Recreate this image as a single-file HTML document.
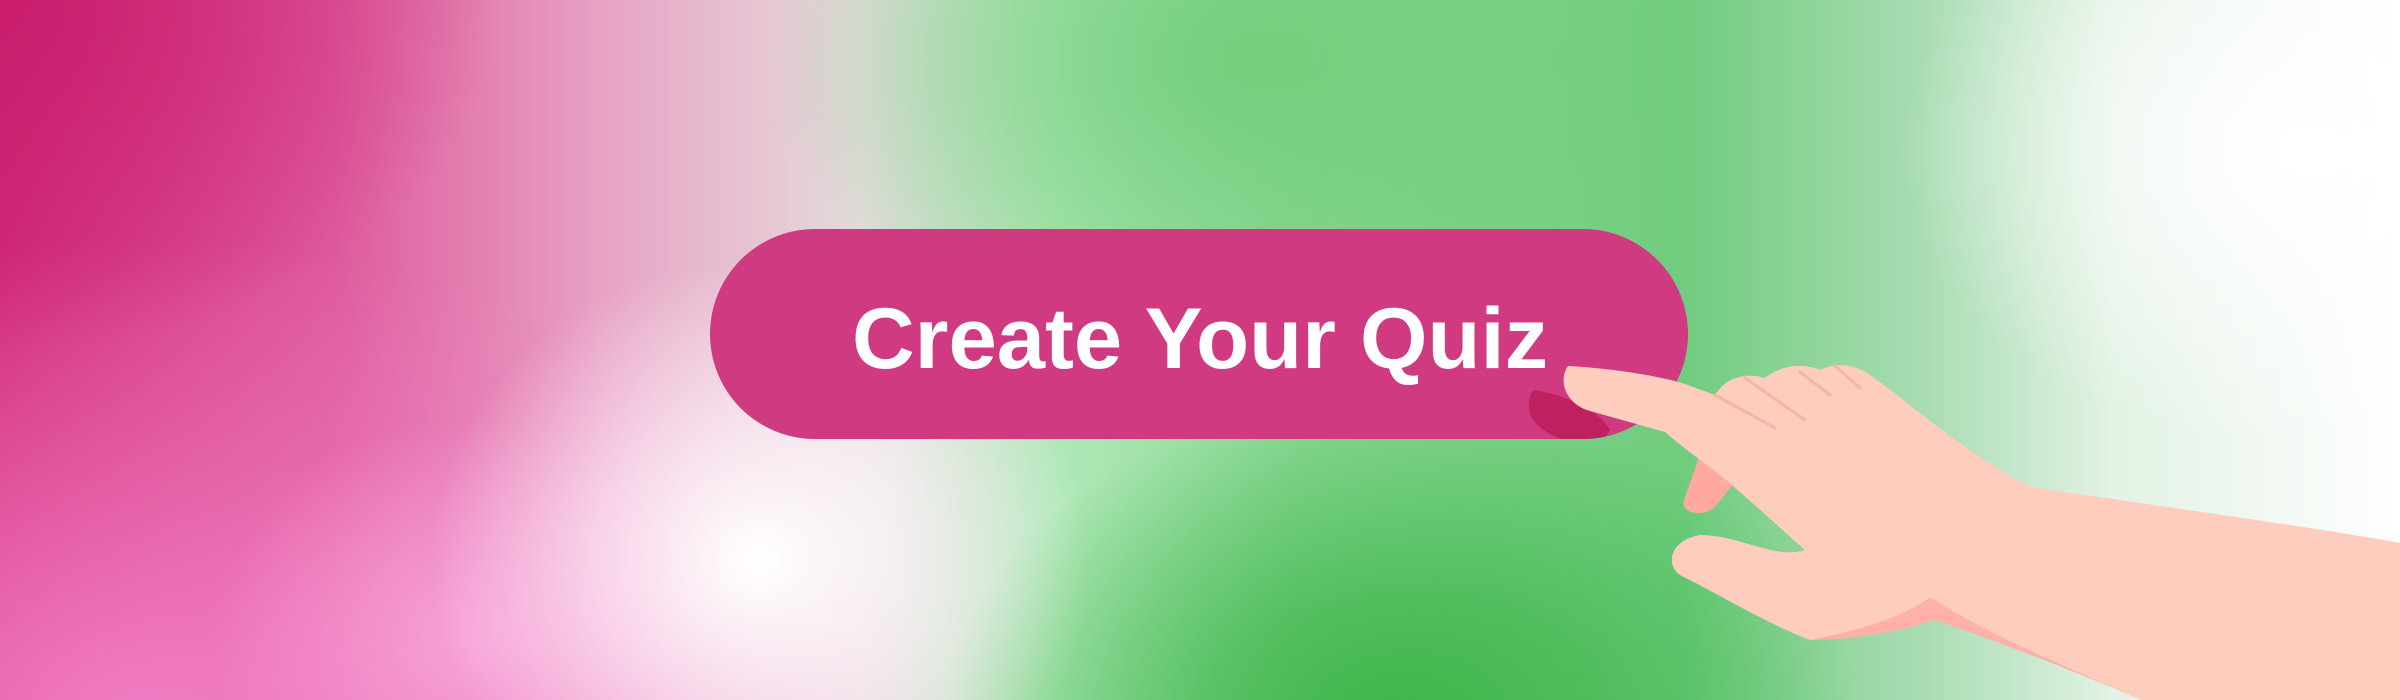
<!DOCTYPE html>
<html><head><meta charset="utf-8"><style>
html,body{margin:0;padding:0}
body{width:2400px;height:700px;overflow:hidden;position:relative;
background:
radial-gradient(ellipse 460px 320px at 1400px 720px, #3db54a 0%, rgba(61,181,74,.7) 40%, rgba(61,181,74,0) 100%),
radial-gradient(ellipse 480px 330px at 1250px 60px, rgba(112,205,122,.9) 0%, rgba(112,205,122,0) 100%),
linear-gradient(90deg,#d02a78 0%,#de5a9c 14%,#e8a2c4 25%,#e4dcdc 36%,#b0e8b8 44%,#8ad894 54%,#70cc7e 70%,#a8dcb2 80%,#e2f2e4 88%,#fff 100%);
}
.pinkbot{position:absolute;inset:0;background:radial-gradient(ellipse 800px 480px at 150px 720px, rgba(244,130,200,.95), rgba(244,130,200,0));}
.pinktop{position:absolute;inset:0;background:radial-gradient(ellipse 500px 350px at 0px 0px, rgba(200,25,105,.8), rgba(200,25,105,0));}
.pinkmid{position:absolute;inset:0;background:radial-gradient(ellipse 260px 220px at 470px 640px, rgba(250,170,222,.8), rgba(250,170,222,0));}
.white{position:absolute;inset:0;background:radial-gradient(ellipse 330px 300px at 760px 560px, rgba(255,255,255,1) 0%, rgba(255,245,252,.6) 50%, rgba(255,255,255,0) 100%);}
.rightw{position:absolute;inset:0;background:radial-gradient(ellipse 400px 300px at 2300px 150px, #fff, rgba(255,255,255,0));}
svg{position:absolute;left:0;top:0}
</style></head><body>
<div class="pinkbot"></div><div class="pinktop"></div><div class="pinkmid"></div><div class="white"></div><div class="rightw"></div>
<svg width="2400" height="700" viewBox="0 0 2400 700">
<defs><clipPath id="b"><rect x="710" y="229" width="978" height="210" rx="105"/></clipPath></defs>
<rect x="710" y="229" width="978" height="210" rx="105" fill="#d03a80"/>
<path clip-path="url(#b)" d="M1535,390 C1560,395 1595,405 1610,430 L1600,445 C1560,445 1535,428 1530,414 C1527,402 1530,392 1535,390Z" fill="#be2060"/>
<text x="852" y="368" textLength="696" lengthAdjust="spacingAndGlyphs" font-family="Liberation Sans, sans-serif" font-weight="bold" font-size="86" fill="#fff">Create Your Quiz</text>
<path d="M1700,455 L1684,500 C1680,512 1700,518 1714,508 L1738,478Z" fill="#ffa9a0"/>
<path d="M1935,595 C1985,630 2100,670 2226,700 L2142,700 C2060,665 1980,635 1935,620 C1900,632 1850,640 1810,640 C1860,628 1910,612 1935,595Z" fill="#ffb0a8"/>
<path d="M1568,366 C1610,368 1660,376 1685,384 L1715,395 C1725,378 1745,372 1765,378 C1780,366 1800,362 1820,370 C1835,362 1855,364 1870,375 C1900,395 1960,450 2030,487 C2150,505 2300,525 2400,543 L2400,700 L2142,700 C2050,660 1980,630 1930,597 C1900,620 1850,632 1810,640 C1770,625 1720,595 1680,575 C1665,565 1670,540 1700,535 C1740,535 1775,560 1805,550 C1780,528 1750,500 1720,475 C1700,460 1680,445 1665,432 L1590,411 C1565,404 1558,380 1568,366Z" fill="#fecdbd"/>
<path d="M1715,395 L1775,428 M1745,378 L1805,420 M1800,372 L1830,395 M1835,366 L1860,388" stroke="#f8b4a4" stroke-width="3" fill="none" stroke-linecap="round"/>
</svg>
</body></html>
